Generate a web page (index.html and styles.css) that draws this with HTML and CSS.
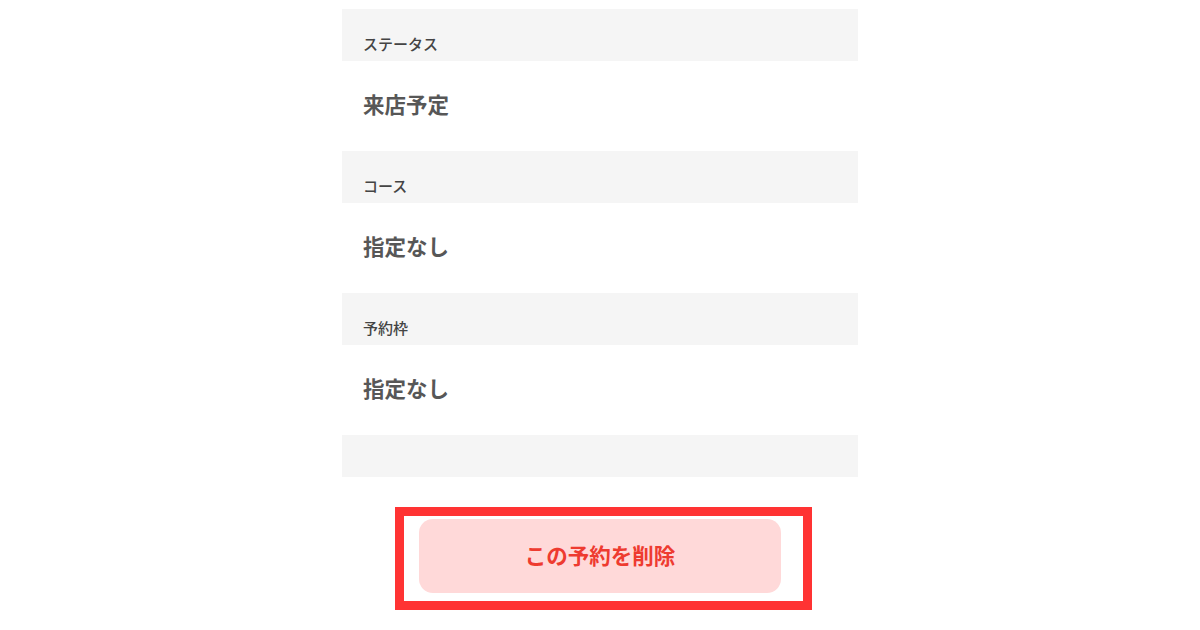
FILE: index.html
```html
<!DOCTYPE html>
<html lang="ja">

<head>
    <meta charset="UTF-8">
    <meta name="viewport" content="width=device-width, initial-scale=1.0">
    <title>予約詳細</title>
    <link rel="stylesheet" href="styles.css">
</head>

<body>
    <div class="detail">
        <dl class="info">
            <dt>ステータス</dt>
            <dd>来店予定</dd>
            <dt>コース</dt>
            <dd>指定なし</dd>
            <dt>予約枠</dt>
            <dd>指定なし</dd>
        </dl>
        <div class="info-end"></div>

        <div class="btn-area">
            <div class="mark">
                <button class="del-btn">この予約を削除</button>
            </div>
        </div>
    </div>
</body>

</html>
```

FILE: styles.css
```css
*{
    margin: 0;
    padding: 0;
    box-sizing: border-box;
}
body{
    background-color: #fff;
    font-family: "Noto Sans CJK JP", "Noto Sans", sans-serif;
}
.detail{
    width: 516px;
    margin: 0 auto;
    padding-top: 9px;
}
.info dt{
    background-color: #f5f5f5;
    height: 52px;
    padding: 24px 0 0 21px;
    font-size: 15px;
    line-height: 22px;
    font-weight: 500;
    color: #444;
}
.info dd{
    height: 90px;
    display: flex;
    align-items: center;
    padding: 0 0 6px 21px;
    font-size: 21.5px;
    font-weight: 700;
    color: #575757;
}
.info-end{
    height: 42px;
    background-color: #f5f5f5;
}
.btn-area{
    display: flex;
    justify-content: center;
    padding-top: 30px;
}
.mark{
    margin-left: 7px;
    width: 417px;
    height: 103px;
    border: 9px solid #ff3333;
    padding: 3px 22px 7px 15px;
}
.del-btn{
    display: block;
    width: 100%;
    height: 74px;
    border: none;
    border-radius: 14px;
    background-color: #ffd9d9;
    color: #ee3b30;
    font-family: inherit;
    font-size: 21.5px;
    font-weight: 700;
    padding-bottom: 3px;
}
```
